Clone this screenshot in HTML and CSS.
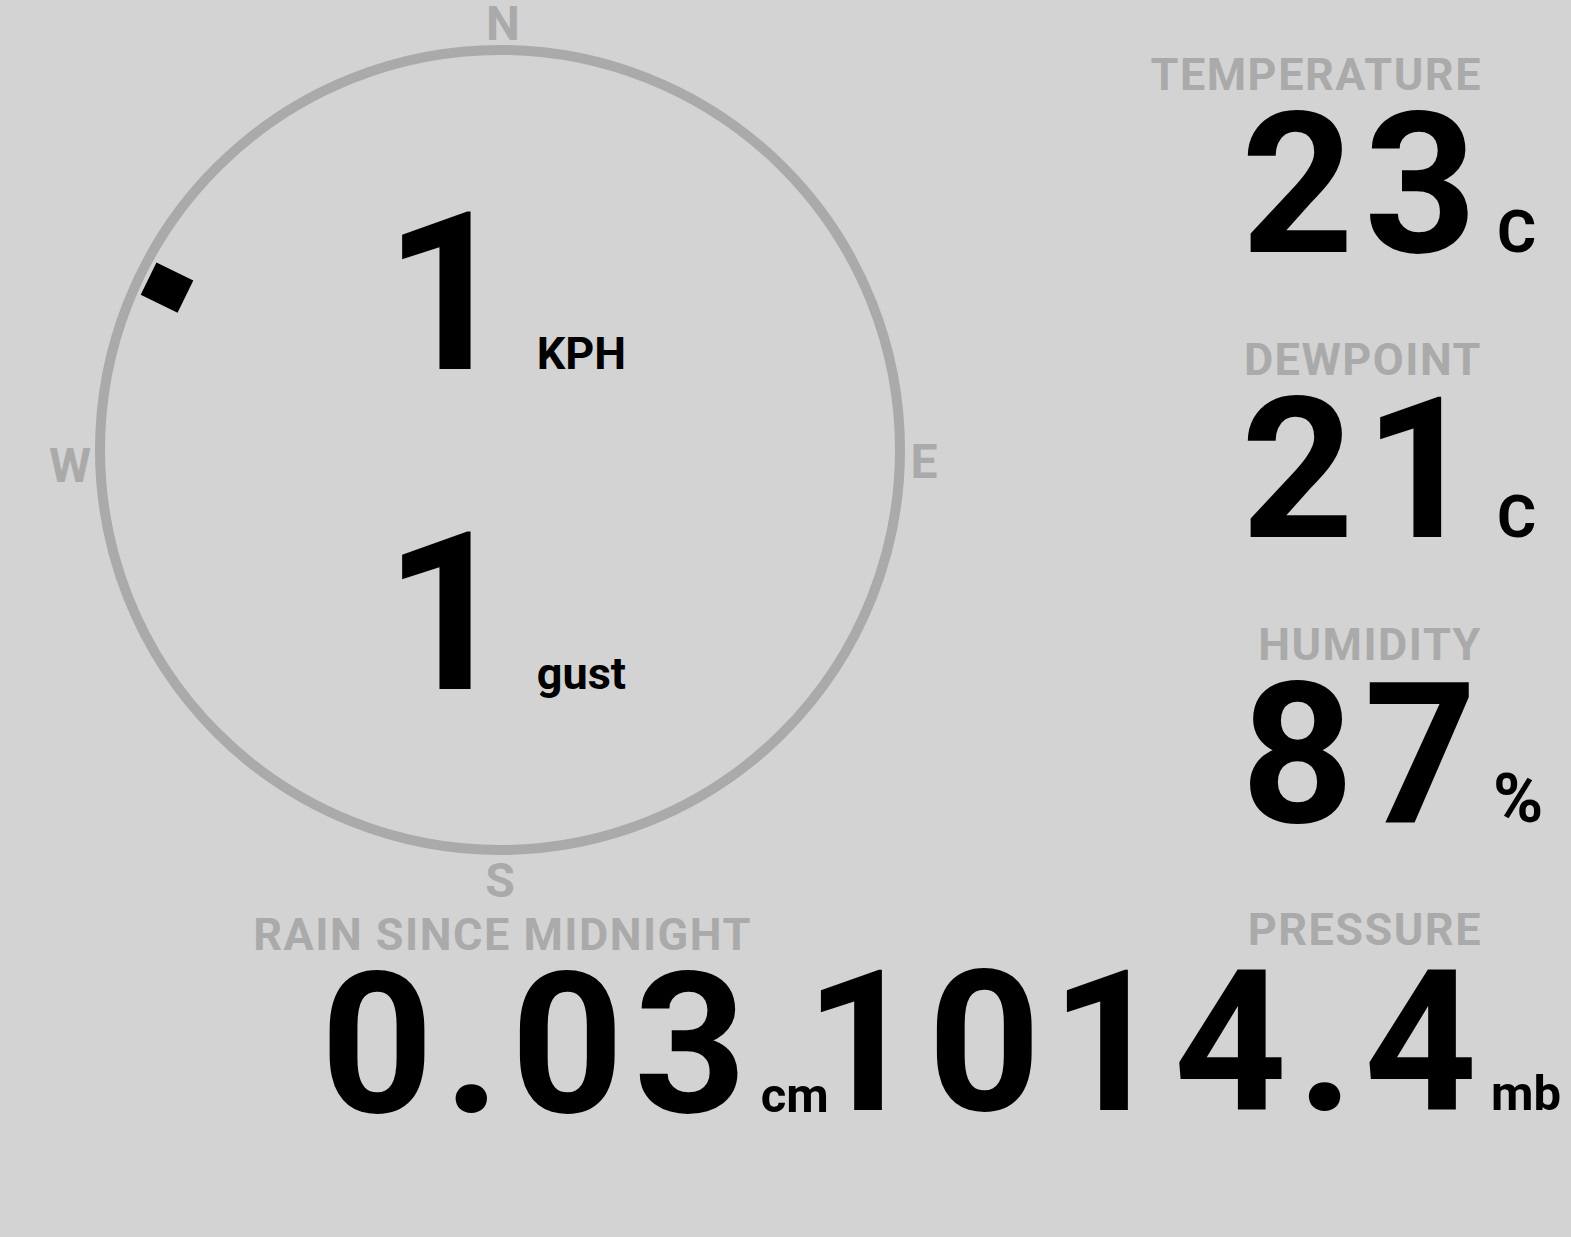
FILE: index.html
```html
<!DOCTYPE html>
<html lang="en">
<head>
  <meta charset="UTF-8">
  <meta name="viewport" content="width=device-width, initial-scale=1.0">
  <title>Weather Station</title>
  <link rel="stylesheet" href="styles.css">
</head>
<body>
  <div class="top-row">
    <div class="compass">
      <svg class="compass-dial" width="1000" height="907" viewBox="0 0 1000 907">
        <circle cx="500" cy="450" r="400" fill="none" stroke="#aaaaaa" stroke-width="10"/>
        <text x="503" y="40" class="point">N</text>
        <text x="924" y="478" class="point">E</text>
        <text x="500" y="897" class="point">S</text>
        <text x="70" y="482" class="point">W</text>
        <!-- wind direction marker -->
        <rect x="482" y="59" width="36" height="41" fill="#000" transform="rotate(-64 500 450)"/>
      </svg>
      <div class="readings">
        <div class="reading">
          <span class="speed">1</span>
          <span class="speed-unit">KPH</span>
        </div>
        <div class="reading">
          <span class="speed">1</span>
          <span class="speed-unit">gust</span>
        </div>
      </div>
    </div>

    <div class="stats">
      <div class="stat">
        <div class="label">TEMPERATURE</div>
        <div class="value">23</div>
        <div class="unit">C</div>
      </div>
      <div class="stat">
        <div class="label">DEWPOINT</div>
        <div class="value">21</div>
        <div class="unit">C</div>
      </div>
      <div class="stat">
        <div class="label">HUMIDITY</div>
        <div class="value">87</div>
        <div class="unit percent">%</div>
      </div>
    </div>
  </div>

  <div class="bottom-row">
    <div class="rain-cell">
      <div class="stat rain">
        <div class="label">RAIN SINCE MIDNIGHT</div>
        <div class="value">0.03</div>
        <div class="unit small">cm</div>
      </div>
    </div>
    <div class="pressure-cell">
      <div class="stat">
        <div class="label">PRESSURE</div>
        <div class="value">1014.4</div>
        <div class="unit small">mb</div>
      </div>
    </div>
  </div>
</body>
</html>
```

FILE: styles.css
```css
body {
  margin: 0;
  padding: 0;
  background-color: #d3d3d3;
  font-family: Roboto, "Liberation Sans", sans-serif;
  font-weight: bold;
  color: #000;
  width: 1571px;
  height: 1237px;
  overflow: hidden;
}

.top-row {
  display: flex;
  height: 907px;
}

.compass {
  position: relative;
  flex: 0 0 1000px;
  height: 907px;
}

.compass-dial {
  position: absolute;
  left: 0;
  top: 0;
  overflow: visible;
}

.point {
  font-family: Roboto, "Liberation Sans", sans-serif;
  font-weight: bold;
  font-size: 48px;
  fill: #aaaaaa;
  text-anchor: middle;
}

.readings {
  position: relative;
  display: flex;
  flex-direction: column;
  align-items: center;
  padding-top: 134px;
  padding-left: 10px;
}

.reading {
  display: flex;
  align-items: baseline;
  gap: 26px;
}

.speed {
  font-size: 221px;
  line-height: 320px;
}

.speed-unit {
  font-size: 45px;
  line-height: 1;
}

.stats {
  flex: 1;
  display: flex;
  flex-direction: column;
  align-items: flex-end;
  padding-top: 52px;
}

.stat {
  display: grid;
  grid-template-columns: auto 80px;
  column-gap: 14px;
  align-items: baseline;
  margin-bottom: 65px;
}

.label {
  grid-column: 1;
  text-align: right;
  font-size: 45px;
  line-height: 45px;
  letter-spacing: 1.5px;
  margin-right: -5px;
  color: #aaaaaa;
}

.value {
  grid-column: 1;
  justify-self: end;
  font-size: 197px;
  line-height: 175px;
  letter-spacing: 10px;
  margin-right: -10px;
}

.unit {
  grid-column: 2;
  font-size: 60px;
  line-height: 1;
  padding-left: 6px;
  white-space: nowrap;
}

.unit.percent {
  font-size: 68px;
  padding-left: 2px;
}

.unit.small {
  font-size: 49px;
  padding-left: 0;
}

.bottom-row {
  display: flex;
}

.rain-cell {
  flex: 0 0 1000px;
  display: flex;
  justify-content: center;
  padding-top: 5px;
}

.rain {
  grid-template-columns: auto 0;
  padding-left: 14px;
}

.pressure-cell {
  flex: 1;
  min-width: 0;
  display: flex;
  justify-content: flex-end;
}
```
